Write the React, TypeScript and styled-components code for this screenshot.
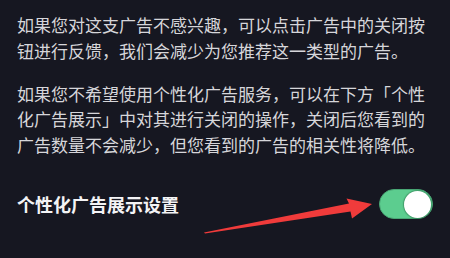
import React from "react";
import styled, { createGlobalStyle } from "styled-components";

const GlobalStyle = createGlobalStyle`
  html, body {
    margin: 0;
    padding: 0;
    background: #161721;
  }
`;

const Page = styled.div`
  position: relative;
  width: 450px;
  height: 258px;
  overflow: hidden;
  background: #161721;
  padding: 12px 17px 0 17px;
  box-sizing: border-box;
  font-family: "Noto Sans CJK SC", "Noto Sans", sans-serif;
`;

const Paragraph = styled.p`
  margin: 0 0 17.5px 0;
  font-size: 17px;
  line-height: 25.5px;
  color: #d6d6da;
  white-space: nowrap;
`;

const SettingRow = styled.div`
  display: flex;
  align-items: center;
  justify-content: space-between;
  height: 30px;
  margin-top: 32px;
`;

const SettingLabel = styled.div`
  font-size: 18px;
  font-weight: 700;
  color: #f3f3f5;
  line-height: 30px;
`;

const Toggle = styled.div<{ $on: boolean }>`
  position: relative;
  width: 54px;
  height: 30px;
  border-radius: 15px;
  box-sizing: border-box;
  background: ${(p) => (p.$on ? "#5ccd8f" : "#55555e")};
  border: 1px solid ${(p) => (p.$on ? "#49a775" : "#44444c")};
`;

const Knob = styled.div<{ $on: boolean }>`
  position: absolute;
  top: 0.5px;
  left: ${(p) => (p.$on ? "24px" : "1px")};
  width: 27px;
  height: 27px;
  border-radius: 50%;
  background: #ffffff;
  box-shadow: 0 0 1px 1px rgba(40, 110, 70, 0.5);
`;

const ArrowLayer = styled.svg`
  position: absolute;
  left: 0;
  top: 0;
  pointer-events: none;
`;

export default function App() {
  return (
    <>
      <GlobalStyle />
      <Page>
        <Paragraph>
          如果您对这支广告不感兴趣，可以点击广告中的关闭按
          <br />
          钮进行反馈，我们会减少为您推荐这一类型的广告。
        </Paragraph>
        <Paragraph>
          如果您不希望使用个性化广告服务，可以在下方「个性
          <br />
          化广告展示」中对其进行关闭的操作，关闭后您看到的
          <br />
          广告数量不会减少，但您看到的广告的相关性将降低。
        </Paragraph>
        <SettingRow>
          <SettingLabel>个性化广告展示设置</SettingLabel>
          <Toggle $on={true}>
            <Knob $on={true} />
          </Toggle>
        </SettingRow>
        <ArrowLayer width="450" height="258" viewBox="0 0 450 258">
          <polygon
            points="204,232.5 349,203.5 346.5,198.5 372,204 352,218.5 350.5,211.5 205,233.5"
            fill="#f03b3b"
          />
        </ArrowLayer>
      </Page>
    </>
  );
}
